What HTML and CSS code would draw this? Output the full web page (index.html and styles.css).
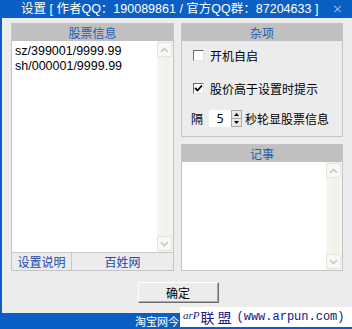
FILE: index.html
```html
<!DOCTYPE html>
<html>
<head>
<meta charset="utf-8">
<link rel="stylesheet" href="styles.css">
</head>
<body>
<div class="win">
  <div class="title">
    <span class="ttext">设置 [ 作者QQ：190089861 / 官方QQ群：87204633 ]</span>
    <span class="close">×</span>
  </div>
  <div class="body">
    <div class="panels">
      <div class="panel left">
        <div class="phead">股票信息</div>
        <div class="listwrap">
          <div class="list">
            <div class="item">sz/399001/9999.99</div>
            <div class="item">sh/000001/9999.99</div>
          </div>
          <div class="sbar">
            <div class="sbtn"><svg width="9" height="6" viewBox="0 0 9 6"><path d="M1 5 L4.5 1.5 L8 5" fill="none" stroke="#c9c9c2" stroke-width="1.6"/></svg></div>
            <div class="strack"></div>
            <div class="sbtn"><svg width="9" height="6" viewBox="0 0 9 6"><path d="M1 1 L4.5 4.5 L8 1" fill="none" stroke="#c9c9c2" stroke-width="1.6"/></svg></div>
          </div>
        </div>
        <div class="links">
          <div class="lk lk1">设置说明</div>
          <div class="lk lk2">百姓网</div>
        </div>
      </div>
      <div class="rcol">
        <div class="panel misc">
          <div class="phead">杂项</div>
          <div class="mbody">
            <div class="row r1"><span class="box"></span><span>开机自启</span></div>
            <div class="row r2"><span class="box"><svg width="9" height="9" viewBox="0 0 9 9"><path d="M1 4 L3.5 6.5 L8 1.5" fill="none" stroke="#000" stroke-width="1.8"/></svg></span><span>股价高于设置时提示</span></div>
            <div class="row r3">
              <span class="ge">隔</span>
              <span class="val">5</span>
              <span class="spin">
                <span class="sp"><svg width="5" height="3" viewBox="0 0 5 3"><path d="M0 3 L2.5 0 L5 3Z" fill="#000"/></svg></span>
                <span class="sp"><svg width="5" height="3" viewBox="0 0 5 3"><path d="M0 0 L2.5 3 L5 0Z" fill="#000"/></svg></span>
              </span>
              <span class="after">秒轮显股票信息</span>
            </div>
          </div>
        </div>
        <div class="panel notes">
          <div class="phead">记事</div>
          <div class="listwrap">
            <div class="list"></div>
            <div class="sbar">
              <div class="sbtn"><svg width="9" height="6" viewBox="0 0 9 6"><path d="M1 5 L4.5 1.5 L8 5" fill="none" stroke="#c9c9c2" stroke-width="1.6"/></svg></div>
              <div class="strack"></div>
              <div class="sbtn"><svg width="9" height="6" viewBox="0 0 9 6"><path d="M1 1 L4.5 4.5 L8 1" fill="none" stroke="#c9c9c2" stroke-width="1.6"/></svg></div>
            </div>
          </div>
        </div>
      </div>
    </div>
    <div class="btnrow"><div class="ok">确定</div></div>
  </div>
  <div class="status"><span class="stext">淘宝网今</span></div>
  <div class="wm"><span class="arp">arP</span><span class="lm">联盟</span><span class="url">(www.arpun.com)</span></div>
</div>
</body>
</html>
```
FILE: styles.css
```css
* { box-sizing: border-box; }
html, body { margin: 0; padding: 0; }
body {
  width: 352px;
  height: 329px;
  overflow: hidden;
  background: #ececec;
  font-family: "Noto Sans", "Noto Sans CJK SC", sans-serif;
  font-size: 12px;
  color: #000;
}
.win {
  position: relative;
  width: 352px;
  height: 329px;
  display: flex;
  flex-direction: column;
}
.title {
  height: 18px;
  background: #0b5fc4;
  color: #fff;
  display: flex;
  align-items: center;
  padding-left: 21px;
  font-family: "Liberation Sans", "Noto Sans CJK SC", sans-serif;
  font-size: 12.5px;
  line-height: 18px;
}
.ttext { flex: 1; white-space: nowrap; }
.close {
  width: 18px;
  font-family: "DejaVu Sans", sans-serif;
  font-size: 13px;
  font-weight: 300;
  opacity: 0.85;
  margin-right: 2px;
}
.body {
  height: 295px;
  border-left: 2px solid #0b5fc4;
  padding: 5px 0 0 9px;
  display: flex;
  flex-direction: column;
}
.panels {
  display: flex;
  gap: 7px;
  height: 248px;
}
.panel {
  border: 1px solid #c4c4c4;
  display: flex;
  flex-direction: column;
}
.phead {
  height: 17px;
  flex: none;
  background: #c0c0c0;
  color: #1d5db4;
  text-align: center;
  font-family: "Noto Sans CJK SC", sans-serif;
  font-size: 12px;
  line-height: 17px;
}
.left { width: 163px; }
.listwrap {
  flex: 1;
  display: flex;
  background: #fff;
  min-height: 0;
}
.list {
  flex: 1;
  padding: 3px 0 0 3px;
}
.item {
  height: 15px;
  line-height: 15px;
  font-family: "Liberation Sans", sans-serif;
  font-size: 12.5px;
  white-space: nowrap;
}
.sbar {
  width: 16px;
  flex: none;
  display: flex;
  flex-direction: column;
  background: linear-gradient(to right, #f6f6f2, #f1f1ec 60%, #f5f5f1);
  padding: 1px 1px 1px 0;
}
.sbtn {
  height: 15px;
  border: 1px solid #e4e4dc;
  border-radius: 2px;
  background: #f8f8f4;
  display: flex;
  align-items: center;
  justify-content: center;
}
.strack { flex: 1; }
.links {
  height: 18px;
  flex: none;
  display: flex;
  border-top: 1px solid #c8c8c8;
  font-family: "Noto Sans CJK SC", sans-serif;
  color: #2347a8;
  font-size: 12px;
  line-height: 17px;
}
.lk1 {
  width: 60px;
  text-align: center;
  border-right: 1px solid #c8c8c8;
}
.lk2 { flex: 1; text-align: center; }
.rcol {
  width: 162px;
  display: flex;
  flex-direction: column;
  gap: 7px;
}
.misc { height: 114px; }
.mbody {
  padding: 6px 0 0 11px;
  font-family: "Noto Sans CJK SC", sans-serif;
  font-size: 12px;
}
.row {
  display: flex;
  align-items: center;
  height: 17px;
}
.r2 { margin-top: 16px; }
.r3 { margin-top: 13px; margin-left: -2px; }
.box {
  width: 11px;
  height: 11px;
  background: #fff;
  border-top: 1px solid #6b6b6b;
  border-left: 1px solid #6b6b6b;
  border-right: 1px solid #e4e4e4;
  border-bottom: 1px solid #e4e4e4;
  margin-right: 6px;
  display: flex;
  align-items: center;
  justify-content: center;
}
.ge { width: 18px; }
.val {
  width: 22px;
  height: 17px;
  background: #fff;
  font-family: "Noto Sans", sans-serif;
  text-align: center;
  line-height: 17px;
  font-size: 12.5px;
}
.spin {
  width: 11px;
  height: 17px;
  display: flex;
  flex-direction: column;
  border: 1px solid #a8a8a8;
  background: #e8e8e8;
  margin-right: 3px;
}
.sp {
  flex: 1;
  display: flex;
  align-items: center;
  justify-content: center;
}
.sp + .sp { border-top: 1px solid #a8a8a8; }
.notes { height: 127px; }
.btnrow {
  display: flex;
  justify-content: center;
  padding: 11px 0 0 0;
  margin-left: -7px;
}
.ok {
  width: 81px;
  height: 21px;
  border-top: 1px solid #fff;
  border-left: 1px solid #fff;
  border-right: 1px solid #6e6e6e;
  border-bottom: 1px solid #6e6e6e;
  box-shadow: inset -1px -1px 0 #a8a8a8;
  background: #ececec;
  text-align: center;
  font-family: "Noto Sans CJK SC", sans-serif;
  font-size: 12px;
  line-height: 19px;
}
.status {
  height: 16px;
  background: #0b5fc4;
  color: #fff;
  font-family: "Noto Sans CJK SC", sans-serif;
  font-size: 11px;
  line-height: 16px;
  padding-left: 135px;
  white-space: nowrap;
}
.wm {
  position: absolute;
  left: 180px;
  top: 307px;
  width: 172px;
  height: 20px;
  background: #fff;
  color: #15168a;
  display: flex;
  align-items: center;
  padding-left: 3px;
  white-space: nowrap;
}
.arp {
  font-family: "Liberation Serif", serif;
  font-style: italic;
  font-size: 11px;
  margin-right: 1px;
  position: relative;
  top: -2px;
}
.lm {
  font-family: "Noto Sans CJK SC", serif;
  font-size: 14px;
  letter-spacing: 3px;
  margin-right: 2px;
}
.url {
  font-family: "Liberation Mono", monospace;
  font-size: 12px;
}
```
